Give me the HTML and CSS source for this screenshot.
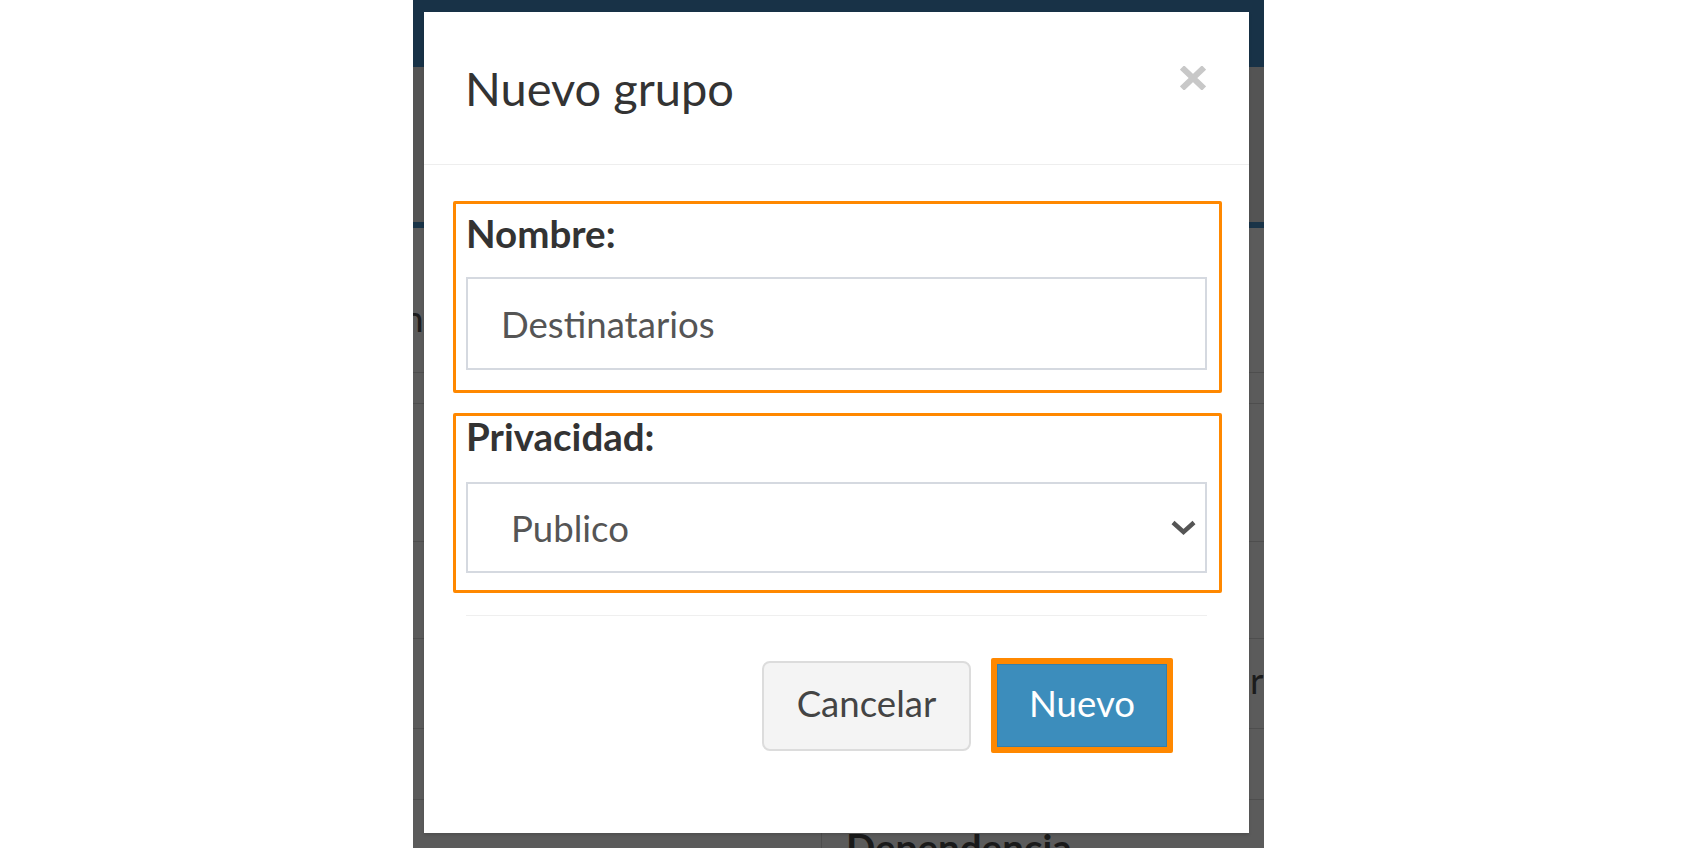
FILE: index.html
```html
<!DOCTYPE html>
<html lang="es">
<head>
<meta charset="utf-8">
<title>Nuevo grupo</title>
<link rel="stylesheet" href="styles.css">
</head>
<body>
<div class="stage">
  <div class="bg">
    <div class="bg-top"></div>
    <div class="bg-band"></div>
    <div class="bg-accent"></div>
    <div class="bg-row r1"><span class="bg-txt bg-n">n</span></div>
    <div class="bg-row r2"></div>
    <div class="bg-row r3"></div>
    <div class="bg-row r4"></div>
    <div class="bg-row r5"><span class="bg-txt bg-r">r</span></div>
    <div class="bg-row r6"></div>
    <div class="bg-row r7">
      <div class="bg-cell"></div>
      <div class="bg-cell2"><span class="bg-dep">Dependencia</span></div>
    </div>
  </div>

  <div class="modal">
    <div class="modal-header">
      <h4 class="modal-title">Nuevo grupo</h4>
      <button class="close" type="button" aria-label="Cerrar">
        <svg width="26" height="24" viewBox="0 0 26 24"><path d="M2 1.5 L24 22.5 M24 1.5 L2 22.5" stroke="#c8c8c8" stroke-width="6" fill="none"/></svg>
      </button>
    </div>
    <div class="modal-body">
      <div class="form-group g1">
        <label class="lbl">Nombre:</label>
        <div class="field">Destinatarios</div>
      </div>
      <div class="form-group g2">
        <label class="lbl">Privacidad:</label>
        <div class="field select">
          <span>Publico</span>
          <svg class="chev" width="25" height="15" viewBox="0 0 25 15"><polyline points="2,2.5 12.5,12 23,2.5" stroke="#555" stroke-width="4.4" fill="none"/></svg>
        </div>
      </div>
      <div class="modal-footer">
        <div class="actions">
          <button class="btn btn-default" type="button">Cancelar</button>
          <div class="hl"><button class="btn btn-primary" type="button">Nuevo</button></div>
        </div>
      </div>
    </div>
  </div>
</div>
</body>
</html>
```
FILE: styles.css
```css
html, body {
  margin: 0;
  padding: 0;
  background: #ffffff;
}

body {
  font-family: Lato, "Liberation Sans", sans-serif;
}

.stage {
  position: relative;
  margin-left: 413px;
  width: 851px;
  height: 848px;
  overflow: hidden;
  background: #5b5b5b;
}

/* darkened page behind the dialog */
.bg-top {
  height: 67px;
  background: #183247;
}

.bg-band {
  height: 155px;
  background: #545454;
}

.bg-accent {
  height: 6px;
  background: #1a3448;
}

.bg-row {
  display: flow-root;
  box-sizing: border-box;
  border-bottom: 1px solid #4e4e4e;
}

.r1 { height: 145px; }
.r2 { height: 31px; }
.r3 { height: 138px; }
.r4 { height: 97px; }
.r5 { height: 90px; }
.r6 { height: 71px; }
.r7 {
  height: 60px;
  border-bottom: 0;
  display: flex;
}

.bg-txt {
  display: block;
  font-size: 37px;
  line-height: 40px;
  color: #1c1c1c;
}

.bg-n {
  margin-top: 70px;
  margin-left: -10px;
}

.bg-r {
  margin-top: 21px;
  margin-left: 837px;
}

.bg-cell {
  width: 408px;
  border-right: 1px solid #4e4e4e;
}

.bg-cell2 {
  padding-left: 24px;
}

.bg-dep {
  display: block;
  margin-top: 24px;
  font-size: 38.5px;
  line-height: 46px;
  font-weight: 700;
  color: #1a1a1a;
  white-space: nowrap;
}

/* dialog */
.modal {
  position: absolute;
  left: 11px;
  top: 12px;
  width: 825px;
  background: #ffffff;
  box-shadow: 0 2px 3px rgba(0, 0, 0, 0.125);
}

.modal-header {
  display: flex;
  justify-content: space-between;
  align-items: flex-start;
  padding: 41px 43px 41px 41px;
  border-bottom: 1px solid #eeeeee;
}

.modal-title {
  margin: 0;
  font-size: 47px;
  line-height: 70px;
  font-weight: 400;
  color: #333333;
}

.close {
  margin-top: 13px;
  padding: 0;
  border: 0;
  background: none;
  width: 26px;
  height: 24px;
  line-height: 0;
}

.modal-body {
  padding: 41px 42px 42px 42px;
}

.form-group {
  position: relative;
}

.form-group::after {
  content: "";
  position: absolute;
  border: 3px solid #ff8800;
  border-radius: 2px;
  pointer-events: none;
}

.g1 {
  margin-bottom: 39px;
}

.g1::after {
  top: -5px;
  bottom: -23px;
  left: -13px;
  right: -15px;
}

.g2 {
  margin-bottom: 42px;
}

.g2::after {
  top: 4px;
  bottom: -20px;
  left: -13px;
  right: -15px;
}

.lbl {
  display: block;
  font-size: 38.5px;
  line-height: 55px;
  font-weight: 700;
  color: #333333;
  margin-bottom: 16px;
}

.g2 .lbl {
  margin-bottom: 18px;
}

.field {
  box-sizing: border-box;
  height: 93px;
  border: 2px solid #d5d9e0;
  padding: 0 33px;
  display: flex;
  align-items: center;
  font-size: 36.6px;
  color: #555555;
}

.select {
  height: 91px;
  justify-content: space-between;
  padding: 0 9px 0 43px;
}

.chev {
  display: block;
}

.modal-footer {
  border-top: 1px solid #efefef;
  padding: 42px 0 38px 0;
}

.actions {
  display: flex;
  justify-content: flex-end;
  align-items: center;
  gap: 20px;
  padding-right: 34px;
}

.btn {
  font-family: inherit;
  font-size: 36.6px;
  line-height: 1;
  cursor: pointer;
}

.btn-default {
  box-sizing: border-box;
  width: 209px;
  height: 90px;
  padding: 0 0 4px 0;
  border: 2px solid #dcdcdc;
  border-radius: 8px;
  background: #f4f4f4;
  color: #444444;
}

.hl {
  box-sizing: border-box;
  width: 182px;
  height: 95px;
  border: 6px solid #ff8800;
  border-radius: 2px;
  display: flex;
}

.btn-primary {
  flex: 1;
  padding: 0 0 4px 0;
  border: 1px solid #367fa9;
  border-radius: 0;
  background: #3c8dbc;
  color: #ffffff;
}
```
